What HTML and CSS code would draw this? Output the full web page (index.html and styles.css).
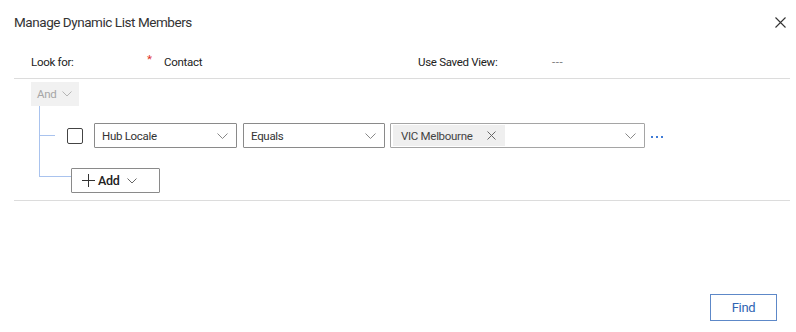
FILE: index.html
```html
<!DOCTYPE html>
<html lang="en">

<head>
    <meta charset="UTF-8">
    <meta name="viewport" content="width=device-width,initial-scale=1">
    <title>Manage Dynamic List Members</title>
    <link rel="stylesheet" href="styles.css">
</head>

<body>
    <div class="dialog">
        <header class="dialog-head">
            <h1>Manage Dynamic List Members</h1>
            <button class="close" aria-label="Close">
                <svg width="11" height="11" viewBox="0 0 11 11"><path d="M0.5 0.5L10.5 10.5M10.5 0.5L0.5 10.5" stroke="#333" stroke-width="1.1" fill="none"/></svg>
            </button>
        </header>

        <div class="fields">
            <span class="look-label">Look for:</span>
            <span class="required">*</span>
            <span class="look-value">Contact</span>
            <span class="view-label">Use Saved View:</span>
            <span class="view-value">---</span>
        </div>

        <section class="query">
            <button class="and-btn">And
                <svg width="10" height="6" viewBox="0 0 10 6"><path d="M0.5 0.5L5 5L9.5 0.5" stroke="#b5b5b5" fill="none"/></svg>
            </button>

            <div class="branch">
                <div class="row">
                    <span class="stub"></span>
                    <span class="checkbox"></span>
                    <div class="select attr">
                        <span>Hub Locale</span>
                        <svg width="11" height="6" viewBox="0 0 11 6"><path d="M0.5 0.5L5.5 5.5L10.5 0.5" stroke="#888" fill="none"/></svg>
                    </div>
                    <div class="select op">
                        <span>Equals</span>
                        <svg width="11" height="6" viewBox="0 0 11 6"><path d="M0.5 0.5L5.5 5.5L10.5 0.5" stroke="#888" fill="none"/></svg>
                    </div>
                    <div class="select value">
                        <span class="tag">VIC Melbourne
                            <svg width="9" height="9" viewBox="0 0 9 9"><path d="M0.5 0.5L8.5 8.5M8.5 0.5L0.5 8.5" stroke="#666" fill="none"/></svg>
                        </span>
                        <svg width="11" height="6" viewBox="0 0 11 6"><path d="M0.5 0.5L5.5 5.5L10.5 0.5" stroke="#888" fill="none"/></svg>
                    </div>
                    <button class="more" aria-label="More">
                        <svg width="12" height="2" viewBox="0 0 12 2"><rect x="0" width="2" height="2" fill="#3f7bd6"/><rect x="5" width="2" height="2" fill="#3f7bd6"/><rect x="10" width="2" height="2" fill="#3f7bd6"/></svg>
                    </button>
                </div>
                <div class="row last">
                    <span class="elbow"></span>
                    <button class="add-btn">
                        <svg width="13" height="13" viewBox="0 0 13 13"><path d="M6.5 0V13M0 6.5H13" stroke="#333" fill="none"/></svg>
                        <b>Add</b>
                        <svg width="10" height="6" viewBox="0 0 10 6"><path d="M0.5 0.5L5 5L9.5 0.5" stroke="#666" fill="none"/></svg>
                    </button>
                </div>
            </div>
        </section>

        <footer class="dialog-foot">
            <button class="find">Find</button>
        </footer>
    </div>
</body>

</html>
```

FILE: styles.css
```css
html, body {
    height: 100%;
}

body {
    margin: 0;
    background: #fff;
    color: #222;
    font-family: 'Roboto', 'Open Sans', sans-serif;
    font-size: 11.5px;
    letter-spacing: -0.3px;
}

button {
    font-family: inherit;
    font-size: inherit;
    letter-spacing: inherit;
    background: none;
    border: 0;
    padding: 0;
    cursor: pointer;
}

.dialog {
    height: 332px;
    display: flex;
    flex-direction: column;
    padding: 0 6px 0 14px;
    box-sizing: border-box;
}

.dialog-head {
    display: flex;
    justify-content: space-between;
    align-items: flex-start;
    padding-top: 12px;
    height: 20px;
}

.dialog-head h1 {
    margin: 0;
    font-size: 13.5px;
    line-height: 20px;
    font-weight: normal;
    letter-spacing: -0.45px;
    color: #333;
}

.close {
    margin: 5px 4px 0 0;
    line-height: 0;
}

.fields {
    display: flex;
    align-items: center;
    height: 24px;
    margin-top: 18px;
    padding: 0 0 4px 17px;
    border-bottom: 1px solid #dcdcdc;
}

.look-label {
    width: 116px;
}

.required {
    width: 17px;
    color: #e0302a;
    position: relative;
    top: -3px;
}

.look-value {
    width: 254px;
}

.view-label {
    width: 134px;
}

.view-value {
    color: #777;
    letter-spacing: 0.6px;
}

.query {
    padding: 3px 0 7px 17px;
    border-bottom: 1px solid #dcdcdc;
}

.and-btn {
    display: flex;
    align-items: center;
    gap: 6px;
    width: 48px;
    height: 24px;
    padding-left: 6px;
    box-sizing: border-box;
    background: #f1f1f1;
    color: #a6a6a6;
}

.branch {
    margin-left: 8px;
}

.row {
    display: flex;
    align-items: center;
    padding: 17px 0 20px;
    border-left: 1px solid #a9c3ee;
}

.stub {
    width: 15px;
    height: 1px;
    background: #a9c3ee;
    margin-right: 12px;
}

.checkbox {
    width: 14px;
    height: 14px;
    border: 1px solid #444;
    border-radius: 2px;
    margin-right: 11px;
}

.select {
    display: flex;
    align-items: center;
    justify-content: space-between;
    height: 25px;
    box-sizing: border-box;
    border: 1px solid #8a8a8a;
    border-radius: 1px;
    padding: 0 8px 0 7px;
    color: #333;
}

.attr {
    width: 143px;
    margin-right: 6px;
}

.op {
    width: 142px;
    margin-right: 5px;
}

.value {
    width: 255px;
    padding-left: 2px;
    border-color: #a5a5a5;
}

.tag {
    display: flex;
    align-items: center;
    gap: 14px;
    height: 21px;
    padding: 0 9px 0 8px;
    background: #efefef;
    color: #444;
}

.more {
    margin-left: 6px;
    line-height: 0;
}

.row.last {
    align-items: flex-start;
    padding: 0;
    border-left: 0;
}

.elbow {
    width: 31px;
    height: 8px;
    border-left: 1px solid #a9c3ee;
    border-bottom: 1px solid #a9c3ee;
}

.add-btn {
    display: flex;
    align-items: center;
    gap: 3px;
    width: 89px;
    height: 25px;
    box-sizing: border-box;
    padding-left: 10px;
    border: 1px solid #8a8a8a;
    border-radius: 1px;
    color: #222;
}

.add-btn b {
    font-weight: 500;
    font-size: 12.5px;
    margin-right: 5px;
}

.dialog-foot {
    margin-top: auto;
    display: flex;
    justify-content: flex-end;
    padding: 0 13px 11px 0;
}

.find {
    width: 67px;
    height: 27px;
    border: 1px solid #5d88c8;
    color: #2f64b3;
    font-size: 13px;
}
```
